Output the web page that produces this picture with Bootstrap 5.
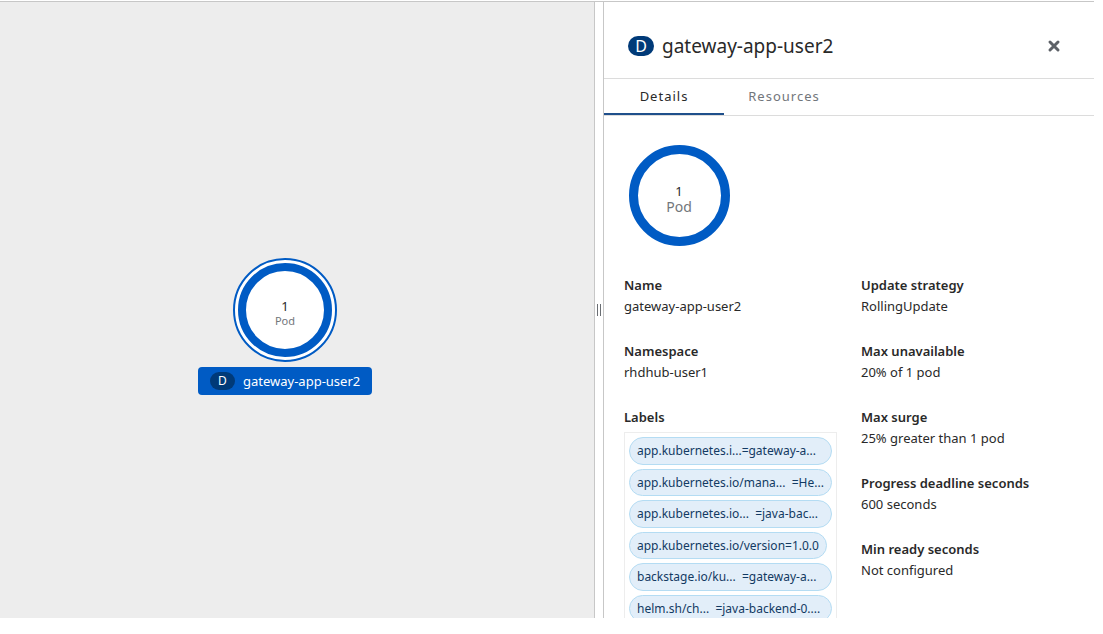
<!DOCTYPE html>
<html lang="en">
<head>
<meta charset="utf-8">
<meta name="viewport" content="width=device-width, initial-scale=1">
<title>gateway-app-user2 · Topology</title>
<link href="https://cdn.jsdelivr.net/npm/bootstrap@5.3.0/dist/css/bootstrap.min.css" rel="stylesheet">
<style>
  body { font-family: "Noto Sans", sans-serif; font-size: 13px; line-height: 20px; color: #292929; background: #fff; padding: 1px 9px 16px 0; }
  .topology { border-top: 1px solid #c7c7c7; }
  .canvas { background: #ededed; min-width: 0; }
  .node { left: 48%; top: calc(50% - 52px); transform: translateX(-50%); }
  .node-label { background: #005bc4; color: #fff; border-radius: 4px; height: 28px; padding: 0 8px; gap: 8px; margin-top: 5px; min-width: 174px; white-space: nowrap; }
  .kind { background: #003a78; color: #fff; border-radius: 20px; width: 25px; height: 18px; font-size: 12px; line-height: 18px; text-align: center; }
  .kind-lg { width: 26px; height: 20px; font-size: 16px; line-height: 20px; }
  .splitter { width: 10px; border: solid #c7c7c7; border-width: 0 1px; }
  .grip { width: 4px; height: 12px; border: solid #6a6e73; border-width: 0 1px; }
  .side { flex: 0 0 490px; }
  .side-head { height: 77px; border-bottom: 1px solid #dcdcdc; padding: 12px 32px 0 24px; gap: 8px; }
  .side-head h1 { font-size: 19px; line-height: 24px; font-weight: 400; }
  .tabs { border-bottom: 1px solid #dcdcdc; height: 37px; }
  .tabs .nav-link { font-size: 13px; letter-spacing: 1px; color: #72767b; background: none; padding: 0; width: 120px; height: 36px; border: 0; border-radius: 0; border-bottom: 2px solid transparent; }
  .tabs .nav-link.active { color: #292929; border-color: #1f4f8b; }
  .details { padding: 28px 20px 0; }
  .facts { margin-top: 26px; display: grid; grid-template-columns: 213px 1fr; column-gap: 24px; }
  .facts dl { margin: 0; }
  dt { font-weight: 600; line-height: 22px; }
  dd { margin: 0 0 24px; line-height: 20px; }
  .chips { border: 1px solid #ededed; padding: 4px; gap: 4px; margin-top: 4px; line-height: 1.5em; }
  .chip { background: #e2eef9; color: #123a63; border: 1px solid #b4dcf3; border-radius: 20px; padding: 3px 7px; font-size: 12px; text-decoration: none; white-space: pre; width: 203px; overflow: hidden; }
  .chip-fit { width: 198px; }
  svg text { text-anchor: middle; }
</style>
</head>
<body class="vh-100 overflow-hidden">
<main class="topology d-flex h-100 overflow-hidden">
  <section class="canvas flex-grow-1 position-relative" aria-label="Topology">
    <div class="node position-absolute d-flex flex-column align-items-center">
      <svg width="104" height="104" viewBox="0 0 104 104">
        <circle cx="52" cy="52" r="51" fill="#fff" stroke="#005bc4" stroke-width="2"/>
        <circle cx="52" cy="52" r="43" fill="none" stroke="#005bc4" stroke-width="8"/>
        <text x="52" y="53" font-size="13" fill="#292929">1</text>
        <text x="52" y="67" font-size="11" fill="#72767b">Pod</text>
      </svg>
      <div class="node-label d-flex align-items-center justify-content-center"><span class="kind">D</span><span>gateway-app-user2</span></div>
    </div>
  </section>
  <div class="splitter d-flex align-items-center justify-content-center flex-shrink-0" role="separator"><span class="grip"></span></div>
  <aside class="side">
    <header class="side-head d-flex align-items-center">
      <span class="kind kind-lg">D</span>
      <h1 class="m-0">gateway-app-user2</h1>
      <button type="button" class="btn p-0 border-0 ms-auto d-flex" aria-label="Close">
        <svg width="16" height="16" viewBox="0 0 16 16"><path d="M4 4l8 8M12 4l-8 8" stroke="#5d6167" stroke-width="3" stroke-linecap="round"/></svg>
      </button>
    </header>
    <nav class="tabs nav">
      <button type="button" class="nav-link active">Details</button>
      <button type="button" class="nav-link">Resources</button>
    </nav>
    <div class="details">
      <svg class="d-block" width="110" height="104" viewBox="0 0 110 104">
        <circle cx="55.500" cy="51.500" r="46" fill="none" stroke="#005bc4" stroke-width="9"/>
        <text x="55" y="52" font-size="13" fill="#292929">1</text>
        <text x="55" y="68" font-size="14" fill="#72767b">Pod</text>
      </svg>
      <div class="facts">
        <dl>
          <dt>Name</dt><dd>gateway-app-user2</dd>
          <dt>Namespace</dt><dd>rhdhub-user1</dd>
          <dt>Labels</dt>
          <dd class="chips d-flex flex-column align-items-start">
            <a href="#" class="chip">app.kubernetes.i...=gateway-a...</a>
            <a href="#" class="chip">app.kubernetes.io/mana...  =He...</a>
            <a href="#" class="chip">app.kubernetes.io...  =java-bac...</a>
            <a href="#" class="chip chip-fit">app.kubernetes.io/version=1.0.0</a>
            <a href="#" class="chip">backstage.io/ku...  =gateway-a...</a>
            <a href="#" class="chip">helm.sh/ch...  =java-backend-0....</a>
          </dd>
        </dl>
        <dl>
          <dt>Update strategy</dt><dd>RollingUpdate</dd>
          <dt>Max unavailable</dt><dd>20% of 1 pod</dd>
          <dt>Max surge</dt><dd>25% greater than 1 pod</dd>
          <dt>Progress deadline seconds</dt><dd>600 seconds</dd>
          <dt>Min ready seconds</dt><dd>Not configured</dd>
        </dl>
      </div>
    </div>
  </aside>
</main>
<script src="https://cdn.jsdelivr.net/npm/bootstrap@5.3.0/dist/js/bootstrap.bundle.min.js"></script>
</body>
</html>
